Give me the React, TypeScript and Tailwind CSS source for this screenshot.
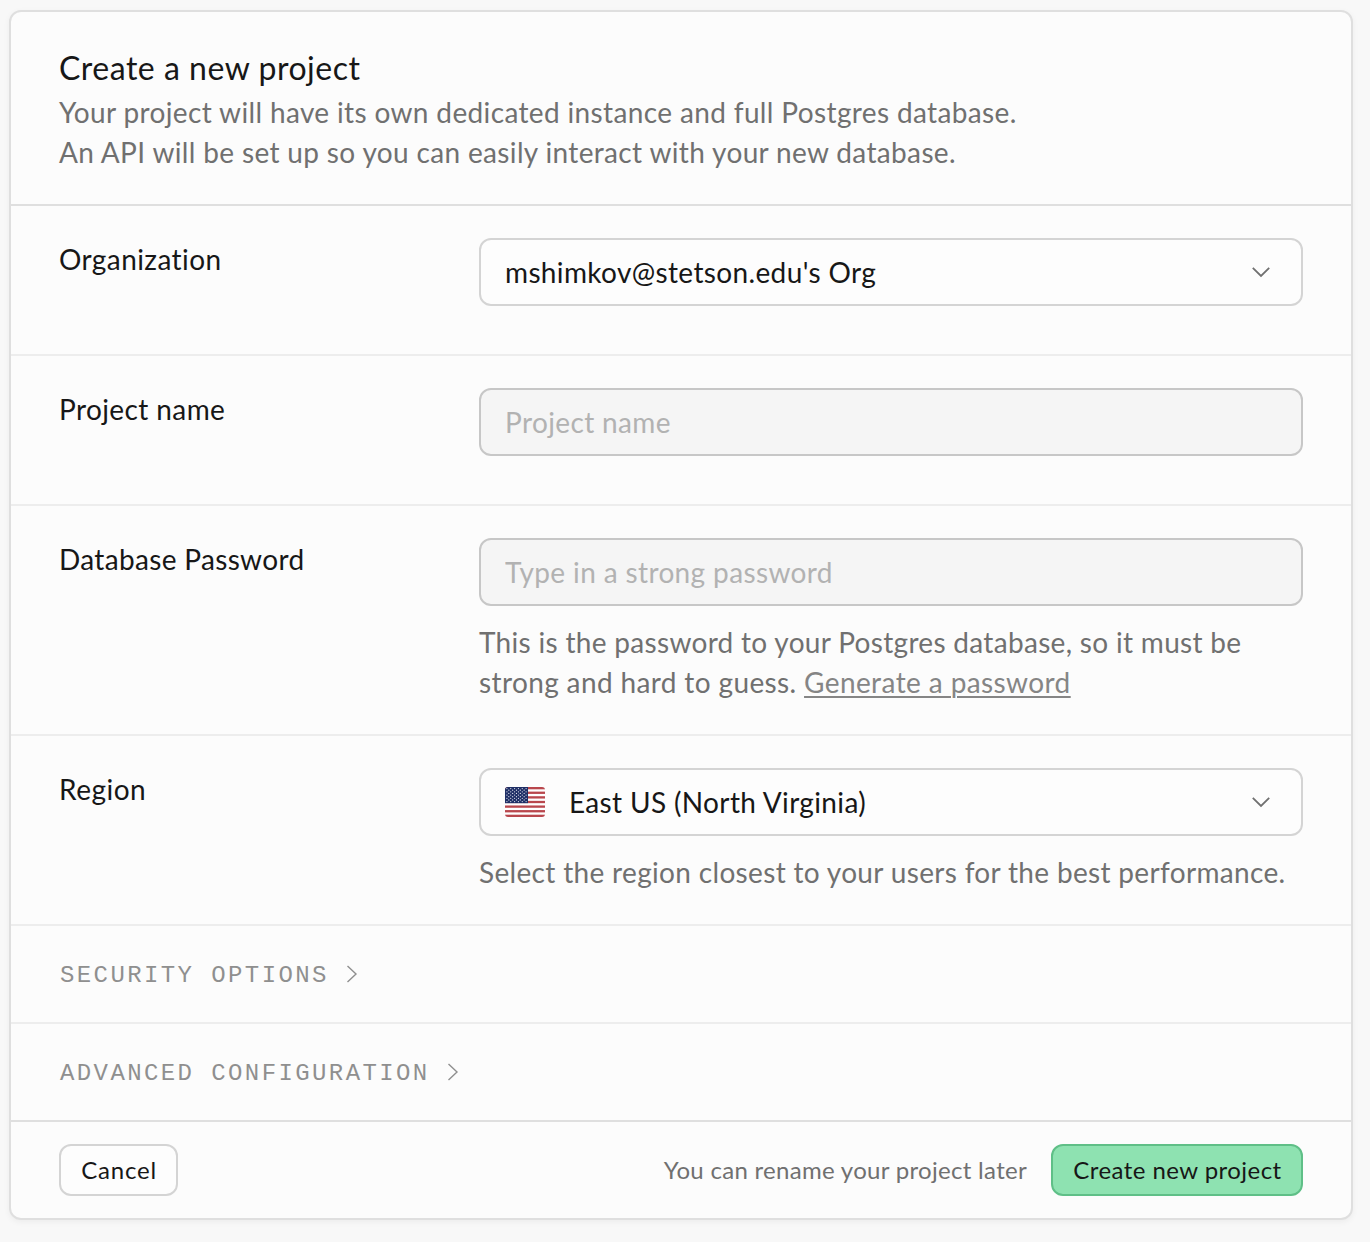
import type { ReactNode } from "react";

function ChevronDown() {
  return (
    <svg className="h-6 w-6 shrink-0" viewBox="0 0 24 24" fill="none" stroke="#707070" strokeWidth="1.8">
      <path d="M3.8 7.8 12 16l8.2-8.2" />
    </svg>
  );
}

function ChevronRight() {
  return (
    <svg className="h-[18px] w-3 shrink-0" viewBox="0 0 12 18" fill="none" stroke="#8f8f8f" strokeWidth="1.4">
      <path d="M1.5 1 10 9 1.5 17" />
    </svg>
  );
}

const stripes = [0, 2, 4, 6, 8, 10, 12];
const starRows = [0, 1, 2, 3, 4, 5, 6, 7, 8];

function UsFlag() {
  return (
    <svg className="h-[30px] w-10 shrink-0 rounded-[3px]" viewBox="0 0 40 30">
      <rect width="40" height="30" fill="#fff" />
      {stripes.map((i) => (
        <rect key={i} y={(i * 30) / 13} width="40" height={30 / 13} fill="#b9474d" />
      ))}
      <rect width="23" height="16.15" fill="#1f2f66" />
      {starRows.map((r) =>
        Array.from({ length: r % 2 ? 5 : 6 }, (_, c) => (
          <circle key={`${r}-${c}`} cx={(r % 2 ? 3.8 : 1.9) + c * 3.84} cy={1.6 + r * 1.62} r="0.62" fill="#dfe3ee" />
        )),
      )}
    </svg>
  );
}

function Row({ label, height, children }: { label: ReactNode; height: string; children: ReactNode }) {
  return (
    <div className={`flex border-b-2 border-[#ededed] px-12 pt-8 ${height}`}>
      <div className="w-[420px] shrink-0 pt-px leading-10 text-[#171717]">{label}</div>
      <div className="flex-1">{children}</div>
    </div>
  );
}

function Select({ children }: { children: ReactNode }) {
  return (
    <button className="flex h-[68px] w-full items-center justify-between rounded-xl border-2 border-[#d4d4d4] bg-[#fdfdfd] pr-[28px] pl-6 text-left text-[#171717]">
      {children}
      <ChevronDown />
    </button>
  );
}

function TextField({ placeholder, type }: { placeholder: string; type: string }) {
  return (
    <input
      type={type}
      placeholder={placeholder}
      className="block h-[68px] w-full rounded-xl border-2 border-[#c7c7c7] bg-[#f5f5f5] px-6 tracking-[0.37px] outline-none placeholder:text-[#b2b2b2]"
    />
  );
}

function Section({ title, border }: { title: string; border: string }) {
  return (
    <div className={`flex h-[98px] items-center gap-[17px] border-b-2 pr-12 pl-[49px] ${border}`}>
      <span className="pt-[3px] font-['Liberation_Mono',monospace] text-2xl tracking-[2.4px] text-[#8f8f8f] uppercase">
        {title}
      </span>
      <ChevronRight />
    </div>
  );
}

export default function App() {
  return (
    <main className="h-[1242px] bg-[#f8f8f8] pt-2.5 pr-[17px] pl-[9px] font-['Lato',sans-serif] text-[28px]">
      <div className="h-[1210px] rounded-xl border-2 border-[#dfdfdf] bg-[#fcfcfc] shadow-[0_2px_6px_rgba(0,0,0,0.05)]">
        <header className="h-[194px] border-b-2 border-[#dfdfdf] px-12 pt-9">
          <h1 className="text-[32px] leading-[40px] tracking-[0.52px] text-[#171717]">Create a new project</h1>
          <p className="mt-1 leading-10 text-[#707070]">
            <span className="block tracking-[0.36px]">
              Your project will have its own dedicated instance and full Postgres database.
            </span>
            <span className="block tracking-[0.35px]">
              An API will be set up so you can easily interact with your new database.
            </span>
          </p>
        </header>

        <Row label={<span className="tracking-[0.42px]">Organization</span>} height="h-[150px]">
          <Select>
            <span className="tracking-[0.36px]">mshimkov@stetson.edu's Org</span>
          </Select>
        </Row>
        <Row label={<span className="tracking-[0.4px]">Project name</span>} height="h-[150px]">
          <TextField placeholder="Project name" type="text" />
        </Row>
        <Row label={<span className="tracking-[0.33px]">Database Password</span>} height="h-[230px]">
          <TextField placeholder="Type in a strong password" type="password" />
          <p className="mt-4 leading-10 text-[#707070]">
            <span className="block tracking-[0.31px]">
              This is the password to your Postgres database, so it must be
            </span>
            <span className="tracking-[0.37px]">strong and hard to guess. </span>
            <a className="tracking-[0.4px] text-[#858585] underline decoration-2 underline-offset-[3px]">Generate a password</a>
          </p>
        </Row>
        <Row label={<span className="tracking-[0.5px]">Region</span>} height="h-[190px]">
          <Select>
            <span className="flex items-center gap-6">
              <UsFlag />
              <span className="tracking-[0.35px]">East US (North Virginia)</span>
            </span>
          </Select>
          <p className="mt-4 leading-10 tracking-[0.33px] text-[#707070]">
            Select the region closest to your users for the best performance.
          </p>
        </Row>

        <Section title="Security options" border="border-[#ededed]" />
        <Section title="Advanced configuration" border="border-[#dfdfdf]" />

        <footer className="flex h-24 items-center px-12 text-2xl">
          <button className="h-[52px] w-[119px] rounded-xl border-2 border-[#d4d4d4] bg-[#fdfdfd] pl-px tracking-[0.8px] text-[#171717]">
            Cancel
          </button>
          <span className="ml-auto tracking-[0.3px] text-[#707070]">You can rename your project later</span>
          <button className="ml-6 h-[52px] w-[252px] rounded-xl border-2 border-[#5fbf87] bg-[#8ee2b1] pl-px tracking-[0.45px] text-[#171717]">
            Create new project
          </button>
        </footer>
      </div>
    </main>
  );
}
